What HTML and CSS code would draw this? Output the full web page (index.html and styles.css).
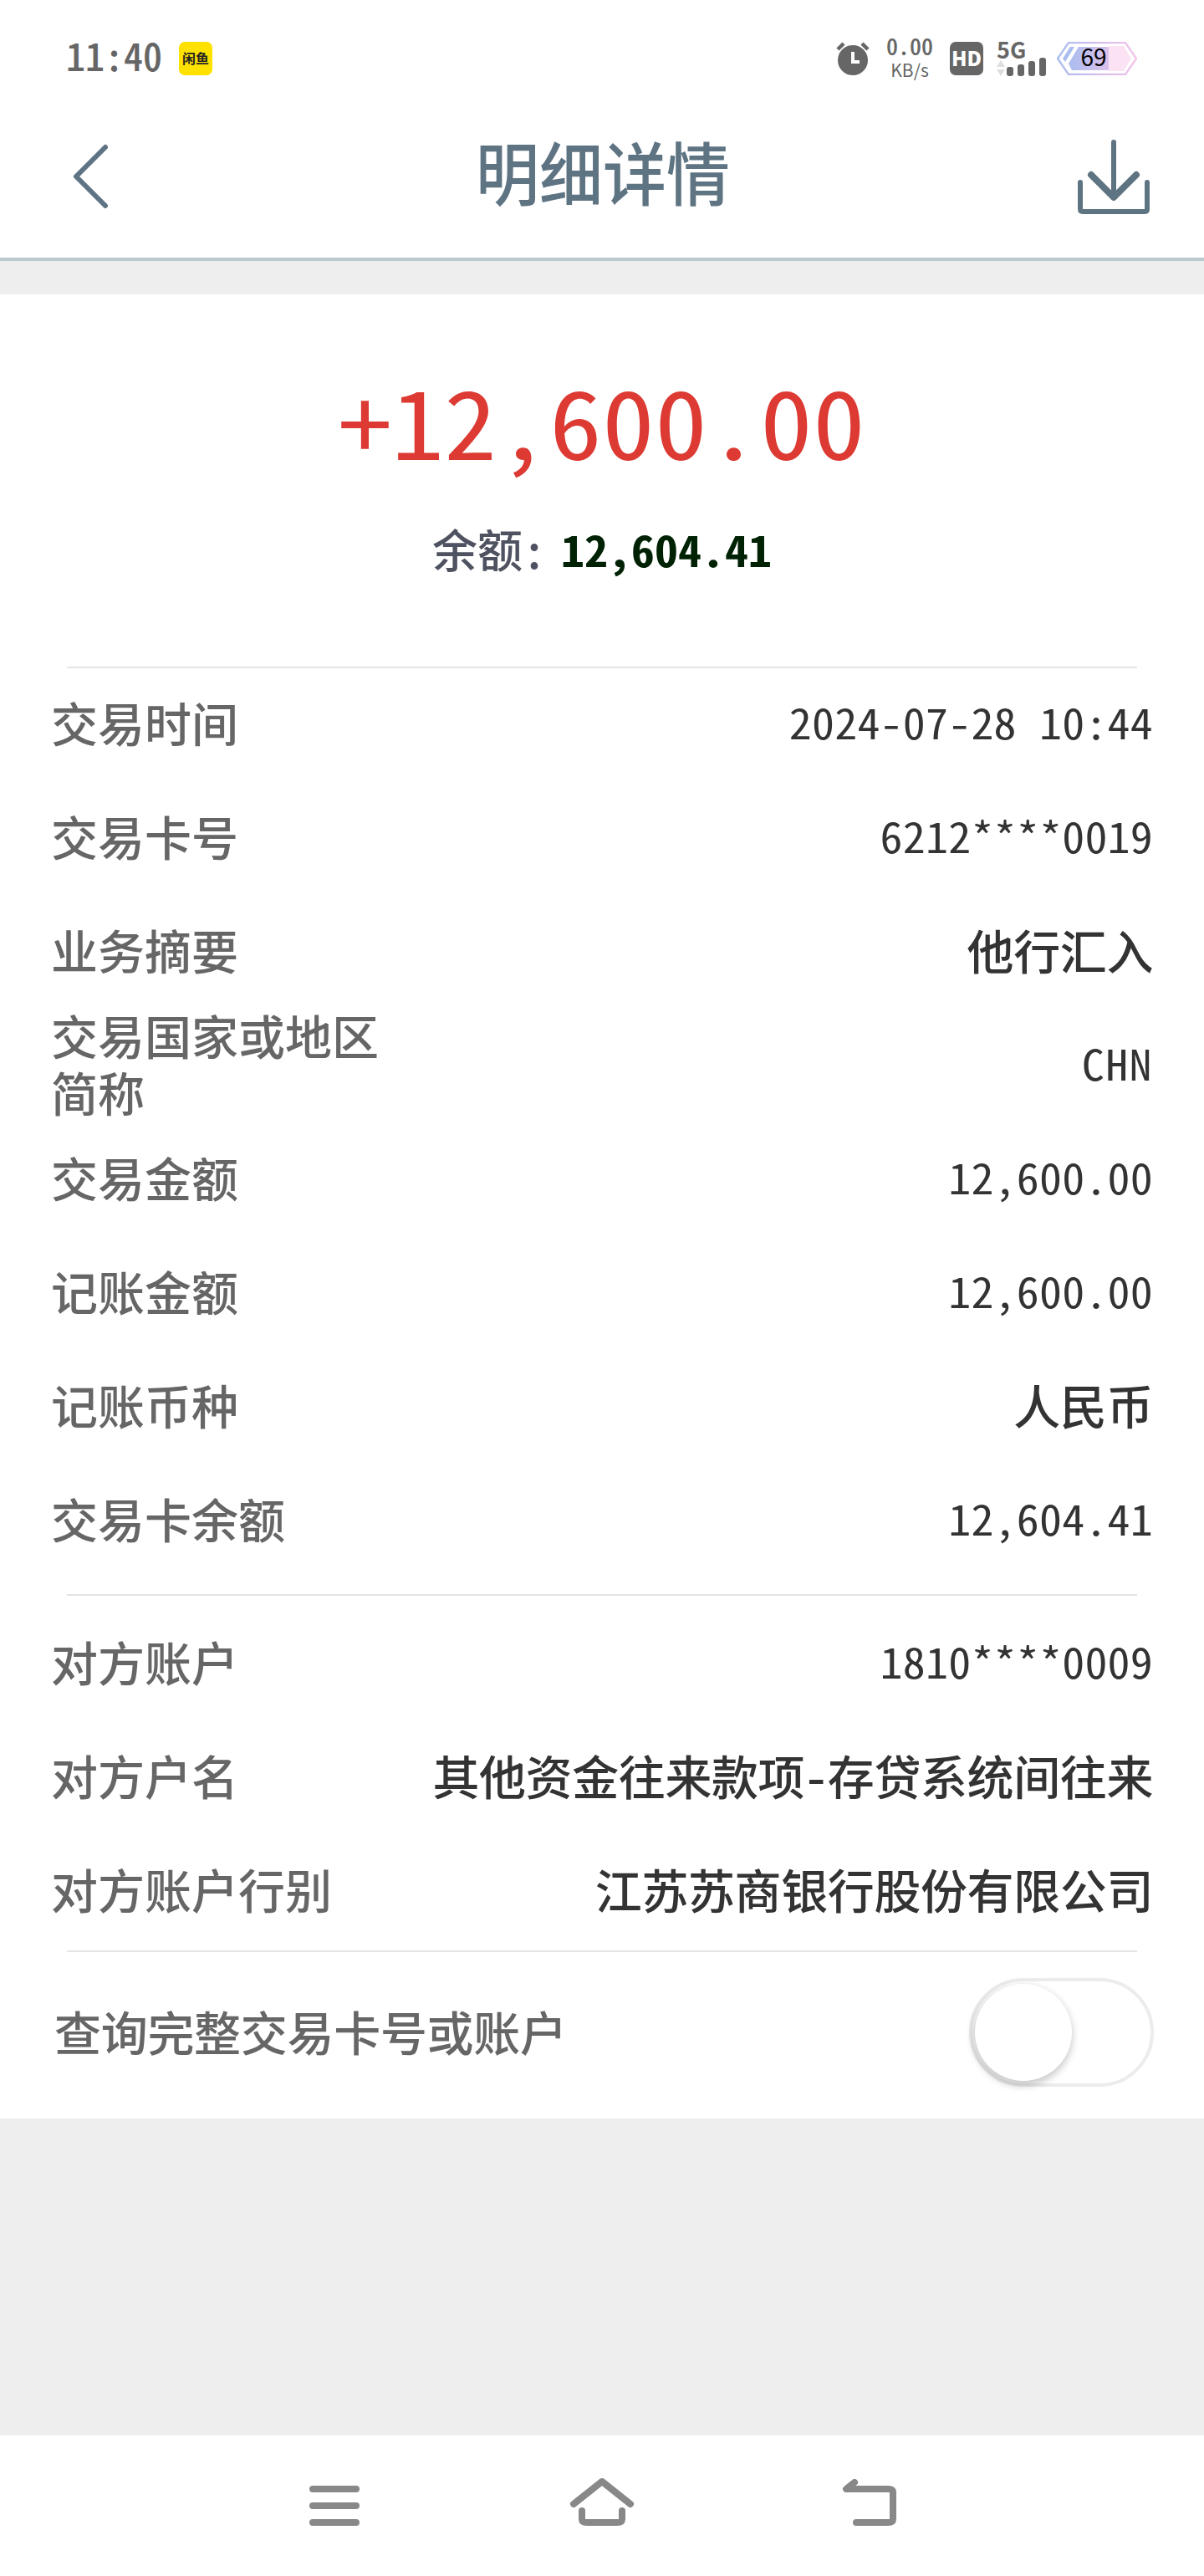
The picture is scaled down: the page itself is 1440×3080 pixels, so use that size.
FILE: index.html
```html
<!DOCTYPE html>
<html lang="zh-CN">
<head>
  <meta charset="UTF-8">
  <meta name="viewport" content="width=device-width, initial-scale=1.0">
  <title>明细详情</title>
  <link rel="stylesheet" href="styles.css">
</head>
<body>
  <!-- Status Bar -->
  <div class="status-bar">
    <span class="clock num">11:40</span>
    <span class="app-badge">闲鱼</span>
    <div class="status-icons">
      <svg class="alarm" width="40" height="40" viewBox="0 0 40 40">
        <circle cx="20" cy="22" r="18" fill="#666"/>
        <path d="M2 9l7-7M38 9l-7-7" stroke="#666" stroke-width="4.5"/>
        <path d="M20 12v12h8" fill="none" stroke="#fff" stroke-width="4"/>
      </svg>
      <div class="speed">
        <span class="num">0.00</span>
        <span class="unit">KB/s</span>
      </div>
      <span class="hd">HD</span>
      <div class="network">
        <span class="net-type">5G</span>
        <svg width="60" height="24" viewBox="0 0 60 24">
          <path d="M0 12l5-8 5 8zM0 15h10l-5 8z" fill="#ddd"/>
          <rect x="12" y="12" width="8" height="11" rx="3" fill="#666"/>
          <rect x="25" y="9" width="8" height="14" rx="3" fill="#666"/>
          <rect x="38" y="5" width="8" height="18" rx="3" fill="#666"/>
          <rect x="51" y="1" width="8" height="22" rx="3" fill="#666"/>
        </svg>
      </div>
      <div class="battery">
        <svg width="96" height="40" viewBox="0 0 96 40">
          <defs>
            <linearGradient id="edge" x1="0" x2="1">
              <stop offset="0" stop-color="#a9bdf0"/>
              <stop offset="0.5" stop-color="#d3bdec"/>
              <stop offset="1" stop-color="#f3c6ea"/>
            </linearGradient>
            <linearGradient id="level" x1="0" x2="1">
              <stop offset="0" stop-color="#a9bdf0"/>
              <stop offset="1" stop-color="#dcc0ec"/>
            </linearGradient>
          </defs>
          <path d="M14 1h68l13 19-13 19H14L1 20z" fill="#fff" stroke="url(#edge)" stroke-width="2.4"/>
          <path d="M62 5h18l9 15-9 15H62z" fill="#fbe3f4"/>
          <path d="M26 6h36v28H18l-4-8z" fill="url(#level)"/>
          <path d="M16 6h5L10 24l-3-4z" fill="#a9bdf0"/>
        </svg>
        <span class="battery-text">69</span>
      </div>
    </div>
  </div>

  <!-- Header -->
  <div class="header">
    <svg width="48" height="84" viewBox="0 0 48 84">
      <path d="M42 7L7 42l35 35" fill="none" stroke="#5f7483" stroke-width="6" stroke-linecap="round" stroke-linejoin="round"/>
    </svg>
    <h1>明细详情</h1>
    <svg width="92" height="92" viewBox="0 0 92 92">
      <g fill="none" stroke="#5f7483" stroke-linecap="round" stroke-linejoin="round">
        <path d="M46 5v66" stroke-width="6"/>
        <path d="M19 44l27 27 27-27" stroke-width="8"/>
        <path d="M6 53v32q0 3 3 3h74q3 0 3-3V53" stroke-width="6"/>
      </g>
    </svg>
  </div>

  <!-- Detail Card -->
  <div class="card">
    <div class="summary">
      <p class="amount num">+12,600.00</p>
      <p class="balance"><span class="balance-label">余额</span><span class="num colon">:</span><b class="num">12,604.41</b></p>
    </div>

    <div class="section">
      <div class="row"><span class="label">交易时间</span><span class="value num">2024-07-28 10:44</span></div>
      <div class="row"><span class="label">交易卡号</span><span class="value num">6212****0019</span></div>
      <div class="row"><span class="label">业务摘要</span><span class="value">他行汇入</span></div>
      <div class="row"><span class="label">交易国家或地区<br>简称</span><span class="value num country">CHN</span></div>
      <div class="row"><span class="label">交易金额</span><span class="value num">12,600.00</span></div>
      <div class="row"><span class="label">记账金额</span><span class="value num">12,600.00</span></div>
      <div class="row"><span class="label">记账币种</span><span class="value">人民币</span></div>
      <div class="row"><span class="label">交易卡余额</span><span class="value num">12,604.41</span></div>
    </div>

    <div class="section account">
      <div class="row"><span class="label">对方账户</span><span class="value num">1810****0009</span></div>
      <div class="row"><span class="label">对方户名</span><span class="value">其他资金往来款项<span class="num">-</span>存贷系统间往来</span></div>
      <div class="row"><span class="label">对方账户行别</span><span class="value">江苏苏商银行股份有限公司</span></div>
    </div>

    <div class="section query">
      <span class="label">查询完整交易卡号或账户</span>
      <div class="toggle"><div class="knob"></div></div>
    </div>
  </div>

  <!-- Navigation Bar -->
  <div class="nav-bar">
    <svg width="80" height="64" viewBox="0 0 80 64">
      <path d="M14 16h52M14 36h52M14 56h52" stroke="#888" stroke-width="8" stroke-linecap="round"/>
    </svg>
    <svg width="80" height="64" viewBox="0 0 80 64">
      <g fill="none" stroke="#888" stroke-width="8" stroke-linecap="round" stroke-linejoin="round">
        <path d="M6 34L40 7l34 27"/>
        <path d="M16 42v10q0 4 6 4h36q6 0 6-4V42"/>
      </g>
    </svg>
    <svg width="80" height="64" viewBox="0 0 80 64">
      <path d="M22 8L12 16h50q6 0 6 4v32q0 4-6 4H24" fill="none" stroke="#888" stroke-width="8" stroke-linecap="round" stroke-linejoin="round"/>
    </svg>
  </div>
</body>
</html>
```
FILE: styles.css
```css
/* General Styling */
* {
  box-sizing: border-box;
}

body {
  font-family: 'Noto Sans CJK SC', sans-serif;
  background: #eee;
  color: #333;
  margin: 0;
  height: 3080px;
  display: flex;
  flex-direction: column;
}

h1,
p {
  margin: 0;
}

svg {
  display: block;
}

/* Half-width digits, every character has the same advance */
.num {
  font-feature-settings: "hwid";
  white-space: pre;
}

/* Status Bar */
.status-bar {
  display: flex;
  align-items: center;
  height: 140px;
  padding: 0 80px 0 79px;
  background: #fff;
  color: #666;
}

.clock {
  padding-bottom: 11px;
  font-size: 46px;
  font-weight: 500;
  line-height: 60px;
}

.app-badge {
  width: 40px;
  height: 40px;
  margin-left: 20px;
  border-radius: 7px;
  background: #ffe100;
  color: #222;
  font-size: 16px;
  font-weight: bold;
  line-height: 39px;
  text-align: center;
}

.status-icons {
  display: flex;
  align-items: center;
  margin-left: auto;
}

.speed {
  display: flex;
  flex-direction: column;
  align-items: center;
  width: 56px;
  margin: 0 20px;
  padding-bottom: 3px;
  font-weight: 500;
}

.speed .num {
  font-size: 28px;
  line-height: 28px;
}

.speed .unit {
  font-size: 21px;
  font-weight: normal;
  line-height: 30px;
}

.hd {
  width: 40px;
  height: 40px;
  border-radius: 7px;
  background: #666;
  color: #fff;
  font-size: 24px;
  font-weight: 900;
  line-height: 38px;
  text-align: center;
}

.network {
  width: 60px;
  margin: 0 12px 0 16px;
}

.net-type {
  display: block;
  height: 19px;
  font-size: 27px;
  font-weight: bold;
  line-height: 19px;
}

.battery {
  position: relative;
  width: 96px;
}

.battery-text {
  position: absolute;
  inset: 0;
  padding-right: 8px;
  color: #000;
  font-size: 28px;
  line-height: 35px;
  text-align: center;
}

/* Header */
.header {
  display: flex;
  align-items: center;
  justify-content: space-between;
  height: 172px;
  padding: 0 62px 26px 84px;
  background: #fff;
  border-bottom: 4px solid #b9c9cf;
  color: #5f7483;
}

.header h1 {
  padding: 0 0 14px 24px;
  font-size: 76px;
  font-weight: 500;
  line-height: 100px;
  transform: scaleY(1.08);
}

/* Detail Card */
.card {
  height: 2181px;
  margin-top: 40px;
  background: #fff;
}

.summary {
  height: 445px;
  padding-top: 78px;
  text-align: center;
}

.amount {
  color: #dc3a33;
  font-size: 126px;
  line-height: 140px;
  transform: scaleY(0.9);
}

.balance {
  display: flex;
  justify-content: center;
  align-items: center;
  margin-top: 46px;
  font-size: 56px;
  line-height: 80px;
}

.balance-label,
.balance .colon {
  color: #4f5260;
  font-weight: 500;
}

.balance-label {
  font-size: 54px;
}

.balance b {
  margin-left: 18px;
  color: #002204;
  transform: scaleY(0.92);
}

/* Rows */
.section {
  position: relative;
  padding: 0 61px;
}

.section::before {
  content: "";
  display: block;
  height: 2px;
  margin: 0 19px;
  background: #e4e4e4;
}

.row {
  display: flex;
  align-items: center;
  justify-content: space-between;
  height: 136px;
  padding-bottom: 9px;
}

.label {
  color: #666;
  font-size: 56px;
  font-weight: 500;
  line-height: 68px;
}

.value {
  font-size: 56px;
  font-weight: 500;
  letter-spacing: -0.4px;
  line-height: 68px;
}

.value.num {
  font-size: 54px;
  font-weight: normal;
  letter-spacing: 0.2px;
  transform: scaleY(0.93);
}

.value.country {
  letter-spacing: 1.4px;
}

.account {
  margin-top: 19px;
}

.account::before {
  margin-bottom: 13px;
}

.account .row {
  padding-bottom: 7px;
}

.query {
  display: grid;
  grid-template-columns: 1fr auto;
  align-items: center;
  margin-top: 3px;
}

.query::before {
  grid-column: 1 / 3;
}

.query .label {
  padding: 0 0 2px 4px;
  letter-spacing: -0.3px;
}

.toggle {
  width: 221px;
  height: 130px;
  margin: 31px -1px 29px 0;
  padding: 3px;
  border: 4px solid #ececec;
  border-radius: 65px;
}

.knob {
  width: 116px;
  height: 116px;
  border-radius: 50%;
  background: #fff;
  box-shadow: -1px 4px 8px 2px rgba(0, 0, 0, 0.2);
}

/* Navigation Bar */
.nav-bar {
  display: flex;
  justify-content: center;
  gap: 240px;
  height: 168px;
  margin-top: auto;
  padding-top: 48px;
  background: #fff;
}
```
